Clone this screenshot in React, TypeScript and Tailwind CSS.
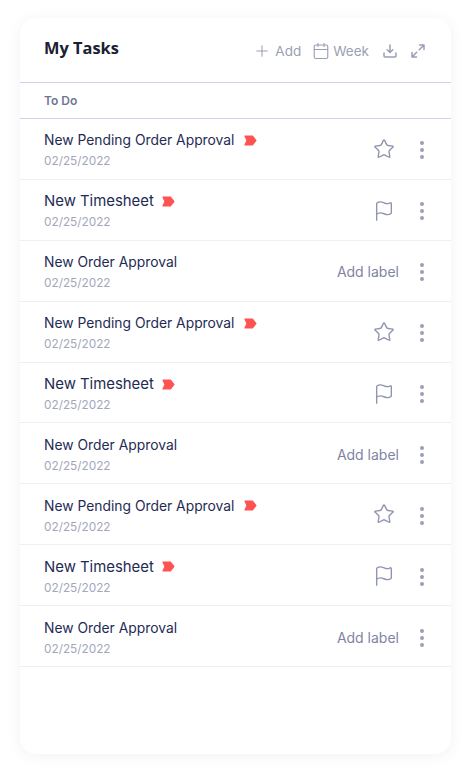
import { Calendar, EllipsisVertical, Flag, Plus, Star } from 'lucide-react';

type Kind = 'star' | 'flag' | 'label';

const rows: { title: string; kind: Kind }[] = [
  { title: 'New Pending Order Approval', kind: 'star' },
  { title: 'New Timesheet', kind: 'flag' },
  { title: 'New Order Approval', kind: 'label' },
  { title: 'New Pending Order Approval', kind: 'star' },
  { title: 'New Timesheet', kind: 'flag' },
  { title: 'New Order Approval', kind: 'label' },
  { title: 'New Pending Order Approval', kind: 'star' },
  { title: 'New Timesheet', kind: 'flag' },
  { title: 'New Order Approval', kind: 'label' },
];

function Tag({ big }: { big: boolean }) {
  return (
    <svg width="13" height="11" viewBox="0 0 13 11" className={big ? 'ml-[8px] shrink-0' : 'ml-[10px] shrink-0'}>
      <path d="M1 1H8.5L12 5.5L8.5 10H1L3 5.5Z" fill="#ff5252" stroke="#ff5252" strokeWidth="1.2" strokeLinejoin="round" />
    </svg>
  );
}

function Row({ title, kind }: { title: string; kind: Kind }) {
  const big = kind === 'flag';
  return (
    <div className="flex h-[60.9px] items-center border-b border-[#eeeef6] pl-[24px] pr-[17px]">
      <div className="flex-1 pt-[3px]">
        <div className="flex items-center">
          <span className={big ? 'text-[14.9px] leading-[20px] text-[#1f2b55]' : 'text-[13.85px] leading-[20px] text-[#1f2b55]'}>{title}</span>
          {kind !== 'label' && <Tag big={big} />}
        </div>
        <div className="mt-[2px] text-[11.8px] leading-[18px] text-[#a3a7bb]">02/25/2022</div>
      </div>
      {kind === 'star' && <Star className="mr-[15px] h-[22px] w-[22px] text-[#8f94b0]" strokeWidth={1.5} />}
      {kind === 'flag' && <Flag className="mr-[15px] mt-[2px] h-[22px] w-[22px] text-[#8f94b0]" strokeWidth={1.5} />}
      {kind === 'label' && <span className="mr-[11px] mt-[2px] text-[14px] text-[#7f84a3]">Add label</span>}
      <EllipsisVertical className="mt-[3px] h-[24px] w-[24px] text-[#9a9fb5]" strokeWidth={2} />
    </div>
  );
}

export default function App() {
  return (
    <div className="h-[776px] w-[472px] bg-white pl-[20px] pr-[21px] pt-[18px] font-['Inter',sans-serif]">
      <div className="h-[736px] w-[431px] rounded-[16px] bg-white shadow-[0_2px_14px_rgba(60,70,120,0.07)]">
        <div className="flex h-[65px] items-center border-b border-[#cfd3e3] pl-[24px] pr-[26px]">
          <h1 className="-mt-[3px] flex-1 font-['Open_Sans',sans-serif] text-[16.4px] font-bold text-[#1c2033]">My Tasks</h1>
          <div className="mt-[2px] flex items-center text-[13.5px] text-[#9a9fb5]">
            <Plus className="h-[18px] w-[18px]" strokeWidth={1.4} />
            <span className="ml-[4px]">Add</span>
            <Calendar className="ml-[11px] h-[18px] w-[18px]" strokeWidth={1.5} />
            <span className="ml-[3px]">Week</span>
            <svg width="14" height="14" viewBox="0 0 14 14" fill="none" stroke="currentColor" strokeWidth="1.5" strokeLinecap="round" strokeLinejoin="round" className="ml-[14px]">
              <path d="M7 1V8.5M4.2 5.8L7 8.5L9.8 5.8" />
              <path d="M1 9V12C1 12.6 1.4 13 2 13H12C12.6 13 13 12.6 13 12V9" />
            </svg>
            <svg width="14" height="14" viewBox="0 0 14 14" fill="none" stroke="currentColor" strokeWidth="1.5" strokeLinecap="round" strokeLinejoin="round" className="ml-[14px]">
              <path d="M8.5 1H13V5.5M13 1L8.3 5.7" />
              <path d="M5.5 13H1V8.5M1 13L5.7 8.3" />
            </svg>
          </div>
        </div>
        <div className="flex h-[36px] items-center border-b border-[#cfd3e3] pl-[24px] text-[12px] font-semibold text-[#6f7593]">To Do</div>
        {rows.map((r, i) => (
          <Row key={i} title={r.title} kind={r.kind} />
        ))}
      </div>
    </div>
  );
}
